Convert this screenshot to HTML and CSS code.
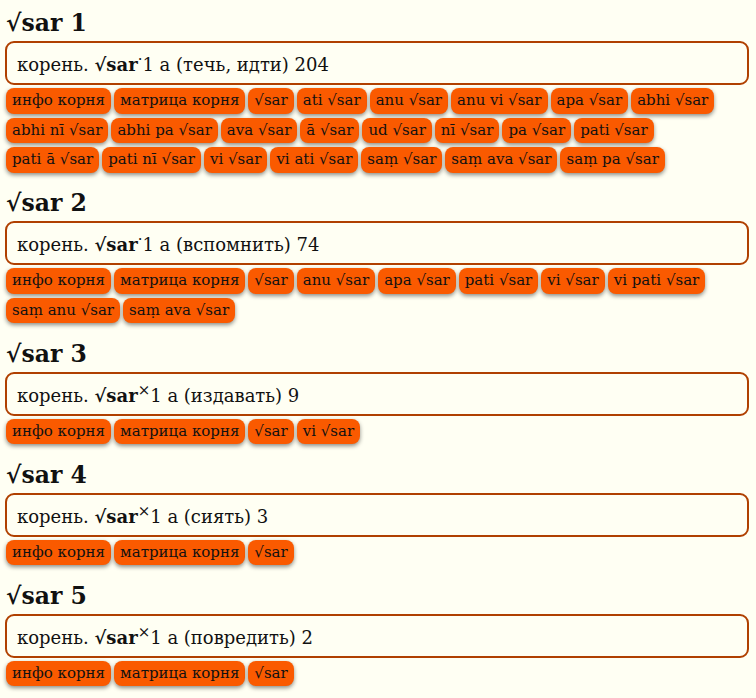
FILE: index.html
```html
<!DOCTYPE html>
<html lang="ru">
<head>
<meta charset="utf-8">
<link rel="stylesheet" href="styles.css">
</head>
<body>
<div class="page">
  <section class="root">
    <h2 class="root-title">√sar 1</h2>
    <div class="root-box">корень. <b>√sar</b><sup>·</sup>1 a (течь, идти) 204</div>
    <div class="btns">
      <span class="btn">инфо корня</span><span class="btn">матрица корня</span><span class="btn">√sar</span><span class="btn">ati √sar</span><span class="btn">anu √sar</span><span class="btn">anu vi √sar</span><span class="btn">apa √sar</span><span class="btn">abhi √sar</span><span class="btn">abhi nī √sar</span><span class="btn">abhi pa √sar</span><span class="btn">ava √sar</span><span class="btn">ā √sar</span><span class="btn">ud √sar</span><span class="btn">nī √sar</span><span class="btn">pa √sar</span><span class="btn">pati √sar</span><span class="btn">pati ā √sar</span><span class="btn">pati nī √sar</span><span class="btn">vi √sar</span><span class="btn">vi ati √sar</span><span class="btn">saṃ √sar</span><span class="btn">saṃ ava √sar</span><span class="btn">saṃ pa √sar</span>
    </div>
  </section>
  <section class="root">
    <h2 class="root-title">√sar 2</h2>
    <div class="root-box">корень. <b>√sar</b><sup>·</sup>1 a (вспомнить) 74</div>
    <div class="btns">
      <span class="btn">инфо корня</span><span class="btn">матрица корня</span><span class="btn">√sar</span><span class="btn">anu √sar</span><span class="btn">apa √sar</span><span class="btn">pati √sar</span><span class="btn">vi √sar</span><span class="btn">vi pati √sar</span><span class="btn">saṃ anu √sar</span><span class="btn">saṃ ava √sar</span>
    </div>
  </section>
  <section class="root">
    <h2 class="root-title">√sar 3</h2>
    <div class="root-box">корень. <b>√sar</b><sup>×</sup>1 a (издавать) 9</div>
    <div class="btns">
      <span class="btn">инфо корня</span><span class="btn">матрица корня</span><span class="btn">√sar</span><span class="btn">vi √sar</span>
    </div>
  </section>
  <section class="root">
    <h2 class="root-title">√sar 4</h2>
    <div class="root-box">корень. <b>√sar</b><sup>×</sup>1 a (сиять) 3</div>
    <div class="btns">
      <span class="btn">инфо корня</span><span class="btn">матрица корня</span><span class="btn">√sar</span>
    </div>
  </section>
  <section class="root">
    <h2 class="root-title">√sar 5</h2>
    <div class="root-box">корень. <b>√sar</b><sup>×</sup>1 a (повредить) 2</div>
    <div class="btns">
      <span class="btn">инфо корня</span><span class="btn">матрица корня</span><span class="btn">√sar</span>
    </div>
  </section>
</div>
</body>
</html>
```
FILE: styles.css
```css
html, body {
  margin: 0;
  padding: 0;
  background: #fffff3;
  color: #111;
  font-family: "DejaVu Serif", serif;
}
.page {
  padding: 0 7px 0 5px;
}
.root {
  margin: 0 0 7.5px 0;
}
.root-title {
  margin: 0;
  padding: 9px 0 0 1px;
  font-size: 23.5px;
  font-weight: bold;
  line-height: 28px;
}
.root-box {
  margin-top: 4px;
  border: 2px solid #b04000;
  border-radius: 9px;
  padding: 11px 10px 7px 10px;
  font-size: 18px;
  line-height: 22px;
}
.root-box sup {
  font-size: 15px;
  line-height: 0;
}
.btns {
  display: flex;
  flex-wrap: wrap;
  gap: 4px 3px;
  margin-top: 3px;
  padding-left: 1px;
}
.btn {
  background: #fa5a00;
  border-radius: 8px;
  padding: 4px 6px;
  font-size: 15px;
  line-height: 17.5px;
  box-shadow: 0 2px 4px rgba(0, 0, 0, 0.45);
}
```
